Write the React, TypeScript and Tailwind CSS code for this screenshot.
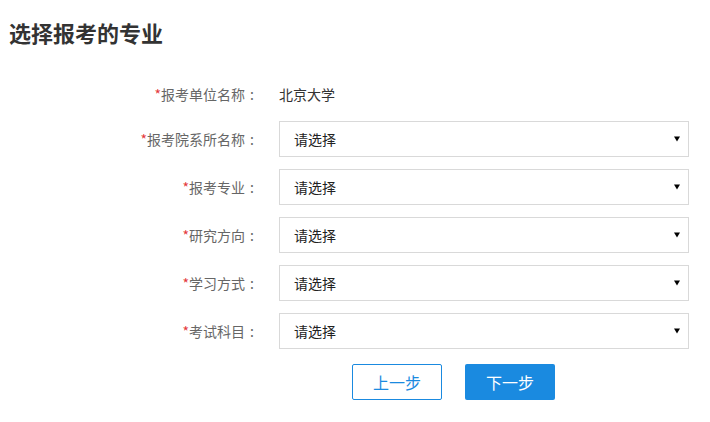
import React from "react";

const FIELDS = ["报考院系所名称", "报考专业", "研究方向", "学习方式", "考试科目"];

const Label = ({ text }: { text: string }) => (
  <div className="w-[259px] shrink-0 text-right text-[14px] text-[#666]">
    <span className="text-[#e4393c]">*</span>
    {text}
    <span className="inline-block w-[14px] text-center">:</span>
  </div>
);

const SelectBox = () => (
  <div className="ml-[20px] flex h-[36px] w-[410px] items-center justify-between border border-[#d9d9d9] bg-white pl-[14px] pr-[8px] text-[14px] text-[#222]">
    <span>请选择</span>
    <svg width="6" height="6" viewBox="0 0 6 6" className="mb-[1px]">
      <path d="M0 0.5h6L3 5.5z" fill="#000" />
    </svg>
  </div>
);

export default function App() {
  return (
    <div
      className="h-[422px] w-[710px] bg-white"
      style={{ fontFamily: '"Noto Sans CJK SC", "Microsoft YaHei", sans-serif' }}
    >
      <h1 className="pl-[9px] pt-[16px] text-[22px] font-bold leading-[32px] text-[#333]">
        选择报考的专业
      </h1>

      <div className="mt-[36px] flex items-center">
        <Label text="报考单位名称" />
        <div className="ml-[20px] text-[14px] text-[#333]">北京大学</div>
      </div>

      <div className="mt-[16px] flex flex-col gap-[12px]">
        {FIELDS.map((f) => (
          <div key={f} className="flex items-center">
            <Label text={f} />
            <SelectBox />
          </div>
        ))}
      </div>

      <div className="mt-[15px] flex pl-[352px] gap-[23px]">
        <button className="h-[36px] w-[90px] rounded-[2px] border border-[#1a8ae0] bg-white text-[16px] text-[#1a8ae0]">
          上一步
        </button>
        <button className="h-[36px] w-[90px] rounded-[2px] bg-[#1a8ae0] text-[16px] text-white">
          下一步
        </button>
      </div>
    </div>
  );
}
